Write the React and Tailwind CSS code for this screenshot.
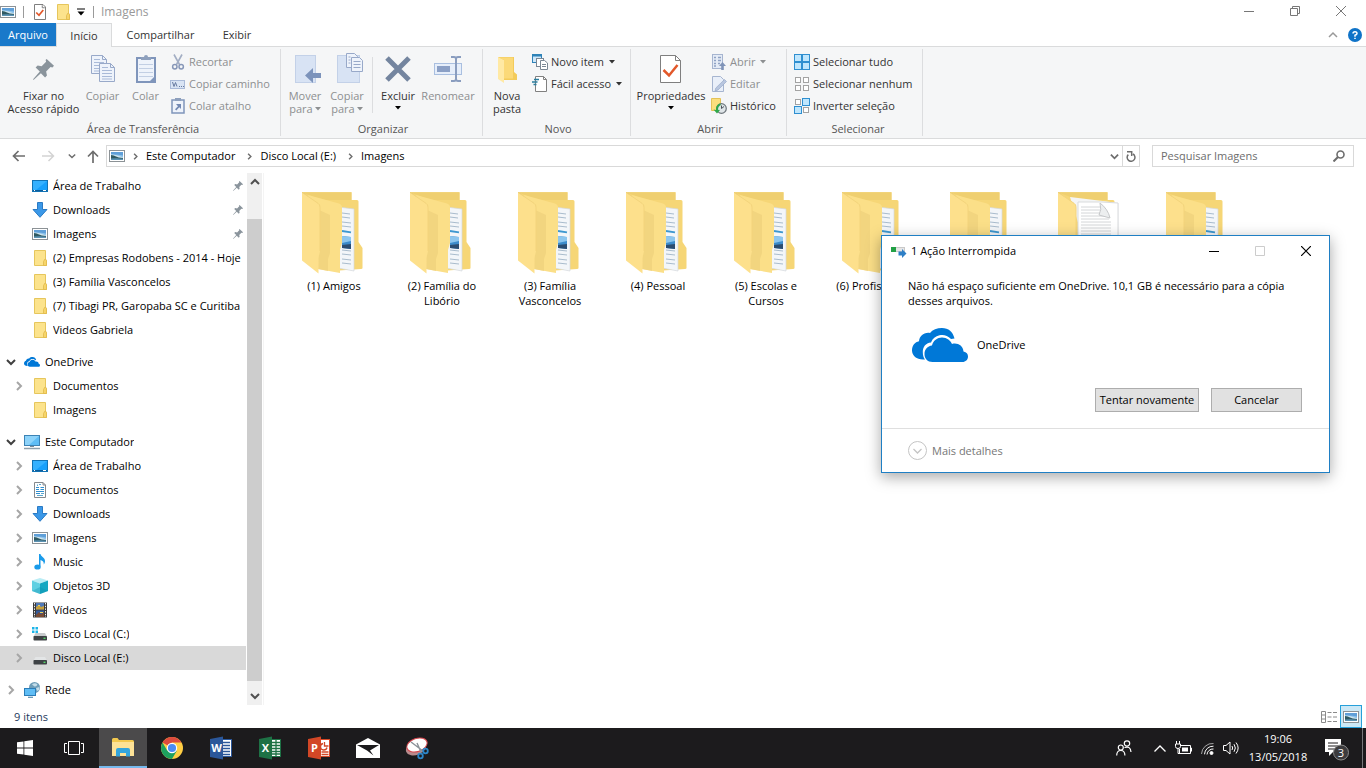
import React from 'react';
import clsx from 'clsx';

/* ---------- small icons (16px grid) ---------- */

const PictureIcon = () => (
  <svg width="16" height="16" viewBox="0 0 16 16" className="shrink-0">
    <rect x="0.5" y="2.5" width="15" height="11" fill="#fff" stroke="#8c9296" />
    <rect x="2" y="4" width="12" height="8" fill="#8fc4ec" />
    <path d="M2 4h12v3.500q-6 -1.500 -12 -1z" fill="#5f9fd8" />
    <path d="M2 6.500q5 0 12 3v2.500h-12z" fill="#cfe5ee" />
    <path d="M2 7q3 .2 5 1.600t7 1.400v2h-12z" fill="#2f5a63" />
    <path d="M2 10.500q6 -.8 12 .2v1.300h-12z" fill="#5c93b3" />
  </svg>
);

const FolderIcon = () => (
  <svg width="16" height="16" viewBox="0 0 16 16" className="shrink-0">
    <path d="M2.500 0.500h11v9l1 1v5h-12z" fill="#fce38c" stroke="#e6c65c" />
    <path d="M11.500 15.500v-4l1.500-2.500h.5l1 1.500v5z" fill="#f7d569" stroke="#e0b94c" strokeWidth="0.800" />
  </svg>
);

const DesktopIcon = () => (
  <svg width="16" height="16" viewBox="0 0 16 16" className="shrink-0">
    <rect x="0.500" y="2.500" width="15" height="11" fill="#18a0fb" stroke="#1273b5" />
    <path d="M1 3h14L4 12H1z" fill="#35b1ff" />
    <path d="M1 12.500h14" stroke="#0c5c99" />
    <path d="M2 12.500h1M11 12.500h3" stroke="#fff" />
  </svg>
);

const DownloadIcon = () => (
  <svg width="16" height="16" viewBox="0 0 16 16" className="shrink-0">
    <path d="M5.500 0.500h5v7h4.500L8 15.300 1 7.500h4.500z" fill="#3b98e8" stroke="#2a7ac4" strokeLinejoin="round" />
  </svg>
);

const DocumentIcon = () => (
  <svg width="16" height="16" viewBox="0 0 16 16" className="shrink-0">
    <path d="M2.500 0.500h8.500l2.500 2.500v12.500h-11z" fill="#fff" stroke="#85898d" />
    <path d="M11 0.500v2.500h2.500" fill="none" stroke="#85898d" />
    <path d="M4 5.500h3M4 7.500h3M8.500 5.500h3.500M8.500 7.500h3.500M4 9.500h8M4 11.500h4" stroke="#2f8fd0" />
    <path d="M5.500 2.500v1.500M7 2.500h2M9 11.500h3M5 13.500h6" stroke="#5aa7cf" />
  </svg>
);

const MusicIcon = () => (
  <svg width="16" height="16" viewBox="0 0 16 16" className="shrink-0">
    <path d="M7 0h1.500c.4 2.500 4.500 3.500 4.500 7 0 1.500-.5 2.600-1.200 3.500.2-2.600-1-3.800-3.300-4.500V12.500H7z" fill="#1a9bea" />
    <ellipse cx="5.500" cy="13" rx="3.200" ry="2.600" fill="#1a9bea" />
  </svg>
);

const CubeIcon = () => (
  <svg width="16" height="16" viewBox="0 0 16 16" className="shrink-0">
    <path d="M0 2.500L8 0l8 2.500L8 5.500z" fill="#b9edf5" />
    <path d="M0 2.500L8 5.500V16L0 13z" fill="#5fd0e2" />
    <path d="M16 2.500L8 5.500V16l8-3z" fill="#15a8c2" />
    <path d="M0 13l8-4 8 4-8 3z" fill="#0e8fae" opacity=".35" />
  </svg>
);

const VideoIcon = () => (
  <svg width="16" height="16" viewBox="0 0 16 16" className="shrink-0">
    <rect x="1" y="0.500" width="14" height="15" fill="#3a3a3a" />
    <path d="M2.500 1v14M13.500 1v14" stroke="#f2f2f2" strokeDasharray="1.500 1.200" />
    <rect x="4" y="1" width="8" height="6.500" fill="#4f79b8" />
    <rect x="4" y="8.500" width="8" height="6.500" fill="#335a9c" />
    <path d="M4 5l3-2 2 2 3-1v3.500H4z" fill="#c9a13a" />
    <path d="M4 13l3-3 2 2.500 3-2.500v5H4z" fill="#7a4b33" />
    <path d="M6 3.500h2M8 10.500h3" stroke="#e7d45b" />
  </svg>
);

const DriveIcon = ({ system }) => (
  <svg width="16" height="16" viewBox="0 0 16 16" className="shrink-0">
    {system && <path d="M0 1h2.500v2.500H0zM3.500 1H6v2.500H3.500zM0 4.500h2.500V7H0zM3.500 4.500H6V7H3.500z" fill="#1cb4e8" />}
    <path d="M3.500 7h9.500l2 3.500H1.500z" fill={system ? '#c8cbcd' : '#e3e5e6'} />
    <rect x="1.500" y="10" width="13.500" height="4.500" rx="0.800" fill="#3e4245" />
    <path d="M11.500 12.300h2" stroke="#57e06a" strokeWidth="1.300" />
  </svg>
);

const ComputerIcon = () => (
  <svg width="16" height="16" viewBox="0 0 16 16" className="shrink-0">
    <rect x="0.500" y="1.500" width="15" height="10" fill="#5fbdf5" stroke="#3c83b5" />
    <path d="M1 2h14L5 11H1z" fill="#8dd3fa" />
    <path d="M6 12.500h4" stroke="#7b8a94" />
    <path d="M0 14.500h16" stroke="#8ea0ac" strokeWidth="1.500" />
  </svg>
);

const NetworkIcon = () => (
  <svg width="16" height="16" viewBox="0 0 16 16" className="shrink-0">
    <circle cx="10.500" cy="5.500" r="5.500" fill="#6e9db8" />
    <path d="M8 2.500q3-2.500 5.500 0-1 2.500-3 2zM12 6l3.500-1-.5 3-2 1z" fill="#c4dde9" />
    <rect x="0.500" y="6.500" width="11" height="7" fill="#5fbdf5" stroke="#2b7db8" />
    <path d="M4 15.300h5" stroke="#5b8fb0" strokeWidth="1.200" />
  </svg>
);

const OneDriveIcon = ({ className }) => (
  <svg viewBox="0 0 56 34" className={clsx('shrink-0', className)}>
    <path d="M11 31.500C4.500 31.500 0 27.500 0 22.500c0-5 3-8.500 7-9.300C7.500 8 12 4 18 5 20.500 1.800 25 0 30 0c6.500 0 11 4 12.500 10.500L39 11C35.500 7 31 6.500 27.500 7.300 23.500 8.200 20.500 10.500 19 14.500 13.500 15 10.800 19 10.800 24c0 3 .7 5.500 2.200 7.500z" fill="#0078d7" />
    <path d="M20.500 34c-5 0-8-3.500-8-8s3-8 7.500-8.500C21 12.500 25.500 9.500 30 9.500c5 0 8.500 3 10 6.500 5.500-1.500 11 1.500 11.500 7.500 3 .5 4.500 2.500 4.500 5 0 3.200-2.500 5.500-5.500 5.500z" fill="#0078d7" />
  </svg>
);

const PinIcon = ({ size }) => (
  <svg width={size} height={size} viewBox="0 0 20 20" className="shrink-0">
    <path d="M13 0l7 6.500-1.500 1.500-1.800-.4-4.200 4.200.8 3.800-1.800 1.900-4-4L1 19.500 0 20l.3-1L6.500 12l-4-4 1.900-1.800 3.800.6 4.300-4.300L12 1z" fill="#8a949c" />
  </svg>
);

const PropertiesIcon = ({ big }) => (
  <svg width={big ? 32 : 16} height={big ? 32 : 16} viewBox="0 0 32 32" className="shrink-0">
    {big ? (
      <path d="M5.500 2.500h15l5 5v22h-20z" fill="#fff" stroke="#7f7f7f" />
    ) : (
      <path d="M5 1h17l5 5v25h-22z" fill="#fff" stroke="#7f7f7f" strokeWidth="2" />
    )}
    <path d="M20.500 2.500v5h5" fill="none" stroke="#7f7f7f" strokeWidth={big ? 1 : 2} />
    <path d="M8.500 17l5.500 5.500L22.500 12" fill="none" stroke="#e2582a" strokeWidth={big ? 2.5 : 3.5} />
  </svg>
);

/* ---------- ribbon icons ---------- */

const sheet = 'M0.500 0.500h11l4 4v14h-15z';

const CopyIcon = () => (
  <svg width="32" height="32" viewBox="0 0 32 32">
    {[[4, 2], [12, 10]].map(([x, y]) => (
      <g key={x} transform={`translate(${x} ${y})`}>
        <path d={sheet} fill="#eef3fb" stroke="#98a9c9" />
        <path d="M11.500 0.500v4h4" fill="none" stroke="#98a9c9" />
        <path d="M3 4.500h6M3 7.500h10M3 10.500h10M3 13.500h10M3 16h10" stroke="#a9bad8" />
      </g>
    ))}
  </svg>
);

const PasteIcon = () => (
  <svg width="32" height="32" viewBox="0 0 32 32">
    <rect x="7" y="5" width="18" height="24" fill="#eef3fb" stroke="#7f95bb" strokeWidth="2" />
    <path d="M11 7V4h3q0-2 2-2t2 2h3v3z" fill="#8ea0bd" />
    <path d="M9 11.500h14M9 15.500h14M9 19.500h14M9 23.500h14" stroke="#c2cfe4" />
    <path d="M20 28l4-4v4z" fill="#7f95bb" />
  </svg>
);

const CutIcon = () => (
  <svg width="16" height="16" viewBox="0 0 16 16" fill="none" className="shrink-0">
    <path d="M4 0.500l5.500 10M12 0.500l-5.500 10" stroke="#a3aec4" strokeWidth="1.600" />
    <circle cx="4.800" cy="12.800" r="2.200" stroke="#8797b8" strokeWidth="1.500" />
    <circle cx="11.200" cy="12.800" r="2.200" stroke="#8797b8" strokeWidth="1.500" />
  </svg>
);

const CopyPathIcon = () => (
  <svg width="16" height="16" viewBox="0 0 16 16" className="shrink-0">
    <rect x="0.500" y="4.500" width="14" height="8" fill="#d9e4f4" stroke="#a9bad8" />
    <path d="M2.500 6l1.500 4.500L5.500 6.500 7 10.500M9 10.500h1M11 10.500h1M13 10.500h1" stroke="#65799f" fill="none" />
  </svg>
);

const PasteShortcutIcon = () => (
  <svg width="16" height="16" viewBox="0 0 16 16" className="shrink-0">
    <rect x="2" y="2" width="12" height="13" fill="#eef3fb" stroke="#7f95bb" strokeWidth="1.500" />
    <rect x="5" y="0" width="6" height="3" fill="#8ea0bd" />
    <path d="M6 6h5v5l-1.700-1.700-3 3.200-1.300-1.300 3-3z" fill="#7389b3" />
  </svg>
);

const MoveToIcon = () => (
  <svg width="32" height="32" viewBox="0 0 32 32">
    <rect x="6.500" y="2.500" width="20" height="27" fill="#d8e3f4" stroke="#c3d1e8" />
    <path d="M16 22.500l8-7.500v5h8v5h-8v5z" fill="#7c93bb" />
  </svg>
);

const CopyToIcon = () => (
  <svg width="32" height="32" viewBox="0 0 32 32">
    <rect x="6.500" y="2.500" width="22" height="27" fill="#d8e3f4" stroke="#c3d1e8" />
    <path d="M15.500 0.500h8l3 3v11h-11z" fill="#eef3fb" stroke="#98a9c9" />
    <path d="M20.500 4.500h8l3 3v11h-11z" fill="#eef3fb" stroke="#98a9c9" />
    <path d="M17.500 4h2M17.500 7h2M17.500 10h2M22.500 8.500h7M22.500 11.500h7M22.500 14.500h7" stroke="#98a9c9" />
  </svg>
);

const DeleteIcon = () => (
  <svg width="32" height="32" viewBox="0 0 32 32">
    <path d="M5 5l22 22M27 5L5 27" stroke="#74859f" strokeWidth="5" />
  </svg>
);

const RenameIcon = () => (
  <svg width="32" height="32" viewBox="0 0 32 32">
    <rect x="2.500" y="10.500" width="27" height="11" fill="#e6eefa" stroke="#a9bfe0" />
    <rect x="5" y="13" width="13" height="6" fill="#8ba0c6" />
    <path d="M19 4h3q2 0 2 2v20q0 2-2 2h-3M29 4h-3q-2 0-2 2M29 28h-3q-2 0-2-2" fill="none" stroke="#8a9dbf" strokeWidth="2" />
  </svg>
);

const NewFolderIcon = () => (
  <svg width="32" height="32" viewBox="0 0 32 32">
    <path d="M7 4h16v15l3 2.500V27H9z" fill="#f3cb5b" />
    <path d="M7 4l6 3v23l-6-4z" fill="#ffe9a4" />
    <path d="M8 4.500h14v21H13V7z" fill="#fbd978" />
  </svg>
);

const NewItemIcon = () => (
  <svg width="16" height="16" viewBox="0 0 16 16" className="shrink-0">
    <rect x="0.500" y="0.500" width="9" height="8" fill="#cfe8fa" stroke="#2f83b8" />
    <path d="M0.500 1.500h9" stroke="#2f83b8" strokeWidth="2" />
    <rect x="4.500" y="4.500" width="7" height="8" fill="#fff" stroke="#7b8794" />
    <path d="M8.500 6.500h4l3 2.500v6.500h-7z" fill="#fff" stroke="#7b8794" />
    <path d="M10 10.500h4M10 12.500h4" stroke="#7b8794" />
  </svg>
);

const EasyAccessIcon = () => (
  <svg width="16" height="16" viewBox="0 0 16 16" className="shrink-0">
    <path d="M3.500 0.500h8l3 3v12h-11z" fill="#fff" stroke="#808080" />
    <path d="M11.500 0.500v3h3" fill="none" stroke="#808080" />
    <path d="M2 3.500h5M0 6h5.500M1.500 8.500h3" stroke="#2a7e9e" strokeWidth="1.400" />
  </svg>
);

const OpenIcon = () => (
  <svg width="16" height="16" viewBox="0 0 16 16" className="shrink-0">
    <rect x="1.500" y="0.500" width="10" height="14" fill="#e4ebf6" stroke="#a6b5d0" />
    <path d="M3 3.500h2M3 6.500h2M3 9.500h2M7 3.500h3M7 6.500h3M7 9.500h2M3 12h2" stroke="#8fa2c4" strokeWidth="1.500" />
    <path d="M11.500 8l3.500 4h-2.200v4h-2.600v-4H8z" fill="#8094b8" />
  </svg>
);

const EditIcon = () => (
  <svg width="16" height="16" viewBox="0 0 16 16" className="shrink-0">
    <path d="M1.500 0.500h8l3 3v12h-11z" fill="#e9eff9" stroke="#a6b5d0" />
    <path d="M13.500 3.500l2 2-8.500 8.500-3 1 .8-3z" fill="#b8c6df" stroke="#9aabca" strokeWidth="0.700" />
  </svg>
);

const HistoryIcon = () => (
  <svg width="16" height="16" viewBox="0 0 16 16" className="shrink-0">
    <path d="M0.500 0.500h9v12h-9z" fill="#fbdf7d" stroke="#e4c258" />
    <circle cx="10.500" cy="10.500" r="4.800" fill="#dfe5e8" stroke="#6d757b" strokeWidth="1.200" />
    <path d="M10.500 7.500v3l2.500-2" fill="none" stroke="#4d545a" />
    <path d="M9 5.500Q4.500 7 5 12l-2.500-.5 3.500 4 3-3.500-2-.2Q7 8 10 7z" fill="#2fa84a" />
  </svg>
);

const cell = (x, y, on) => (
  <rect key={`${x}-${y}`} x={x} y={y} width={on ? 7 : 5} height={on ? 7 : 5} fill={on ? '#bfe6fd' : '#fff'} stroke={on ? '#2f8fd0' : '#a3a3a3'} />
);

const SelectAllIcon = () => (
  <svg width="16" height="16" viewBox="0 0 16 16" className="shrink-0">
    {cell(0.5, 0.5, true)}{cell(8.5, 0.5, true)}{cell(0.5, 8.5, true)}{cell(8.5, 8.5, true)}
  </svg>
);

const SelectNoneIcon = () => (
  <svg width="16" height="16" viewBox="0 0 16 16" className="shrink-0">
    {cell(1.5, 1.5, false)}{cell(9.5, 1.5, false)}{cell(1.5, 9.5, false)}{cell(9.5, 9.5, false)}
  </svg>
);

const InvertIcon = () => (
  <svg width="16" height="16" viewBox="0 0 16 16" className="shrink-0">
    {cell(1.5, 1.5, false)}{cell(8.5, 0.5, true)}{cell(0.5, 8.5, true)}{cell(9.5, 9.5, false)}
  </svg>
);

const Caret = () => (
  <svg width="6" height="4" viewBox="0 0 6 4" className="shrink-0">
    <path d="M0 0h6L3 3.500z" fill="currentColor" />
  </svg>
);

const Chevron = ({ dir, size = 10, width = 2 }) => {
  const paths = {
    right: 'M3 1l4 4-4 4',
    down: 'M1 3l4 4 4-4',
    up: 'M1 7l4-4 4 4',
  };
  return (
    <svg width={size} height={size} viewBox="0 0 10 10" className="shrink-0">
      <path d={paths[dir]} fill="none" stroke="currentColor" strokeWidth={width} />
    </svg>
  );
};

/* ---------- ribbon parts ---------- */

const BigButton = ({ icon, lines, caret, disabled, className }) => (
  <button disabled={disabled} className={clsx('flex flex-col items-center shrink-0', disabled ? 'text-[#8d8f91]' : 'text-[#333]', className)}>
    <span className="flex h-8 items-center mt-1 mb-1">{icon}</span>
    {lines.map((line, i) => (
      <span key={line} className="flex items-center gap-0.5 leading-[13px] whitespace-nowrap">
        {line}
        {caret && i > 0 && <Caret />}
      </span>
    ))}
    {caret && lines.length === 1 && <span className="flex h-3 items-center text-black"><Caret /></span>}
  </button>
);

const SmallButton = ({ icon, label, caret, disabled }) => (
  <button disabled={disabled} className={clsx('flex h-[22px] items-center gap-[3px] whitespace-nowrap', disabled ? 'text-[#8d8f91]' : 'text-[#333]')}>
    {icon}
    <span>{label}</span>
    {caret && <span className="ml-0.5"><Caret /></span>}
  </button>
);

const RibbonGroup = ({ title, className, children }) => (
  <section className={clsx('flex shrink-0 flex-col justify-between border-r border-[#dcdddf]', className)}>
    <div className="flex">{children}</div>
    <h2 className="text-center leading-[14px] text-[#555]">{title}</h2>
  </section>
);

const Ribbon = () => (
  <div className="flex h-[92px] shrink-0 border-b border-[#dadbdc] bg-[#f5f6f7] py-0.5">
    <RibbonGroup title="Área de Transferência" className="w-[281px] pl-1.5">
      <BigButton className="w-[75px]" icon={<PinIcon size={21} />} lines={['Fixar no', 'Acesso rápido']} />
      <BigButton className="w-[43px]" icon={<CopyIcon />} lines={['Copiar']} disabled />
      <BigButton className="w-[43px]" icon={<PasteIcon />} lines={['Colar']} disabled />
      <div className="ml-[3px] mt-0.5">
        <SmallButton icon={<CutIcon />} label="Recortar" disabled />
        <SmallButton icon={<CopyPathIcon />} label="Copiar caminho" disabled />
        <SmallButton icon={<PasteShortcutIcon />} label="Colar atalho" disabled />
      </div>
    </RibbonGroup>
    <RibbonGroup title="Organizar" className="w-[202px] pl-[3px]">
      <BigButton className="w-[42px]" icon={<MoveToIcon />} lines={['Mover', 'para']} caret disabled />
      <BigButton className="w-[42px]" icon={<CopyToIcon />} lines={['Copiar', 'para']} caret disabled />
      <div className="mx-1 mt-2 h-14 w-px bg-[#dcdddf]" />
      <BigButton className="w-[42px]" icon={<DeleteIcon />} lines={['Excluir']} caret />
      <BigButton className="w-[58px]" icon={<RenameIcon />} lines={['Renomear']} disabled />
    </RibbonGroup>
    <RibbonGroup title="Novo" className="w-[148px] pl-[3px]">
      <BigButton className="w-[42px]" icon={<NewFolderIcon />} lines={['Nova', 'pasta']} />
      <div className="ml-1 mt-0.5">
        <SmallButton icon={<NewItemIcon />} label="Novo item" caret />
        <SmallButton icon={<EasyAccessIcon />} label="Fácil acesso" caret />
      </div>
    </RibbonGroup>
    <RibbonGroup title="Abrir" className="w-[156px] pl-[3px]">
      <BigButton className="w-[74px]" icon={<PropertiesIcon big />} lines={['Propriedades']} caret />
      <div className="ml-[3px] mt-0.5">
        <SmallButton icon={<OpenIcon />} label="Abrir" caret disabled />
        <SmallButton icon={<EditIcon />} label="Editar" disabled />
        <SmallButton icon={<HistoryIcon />} label="Histórico" />
      </div>
    </RibbonGroup>
    <RibbonGroup title="Selecionar" className="w-[136px] pl-[7px]">
      <div className="mt-0.5">
        <SmallButton icon={<SelectAllIcon />} label="Selecionar tudo" />
        <SmallButton icon={<SelectNoneIcon />} label="Selecionar nenhum" />
        <SmallButton icon={<InvertIcon />} label="Inverter seleção" />
      </div>
    </RibbonGroup>
  </div>
);

/* ---------- window chrome ---------- */

const TitleBar = () => (
  <header className="flex h-[23px] shrink-0 items-center">
    <PictureIcon />
    <span className="ml-[7px] h-3 w-px bg-[#9a9a9a]" />
    <button aria-label="Propriedades" className="ml-2"><PropertiesIcon /></button>
    <button aria-label="Nova pasta" className="ml-[7px]"><FolderIcon /></button>
    <button aria-label="Personalizar" className="ml-1.5">
      <svg width="8" height="8" viewBox="0 0 8 8"><path d="M0 1h8" stroke="#000" /><path d="M0.500 3.500h7L4 7.500z" fill="#000" /></svg>
    </button>
    <span className="ml-2 h-3 w-px bg-[#9a9a9a]" />
    <h1 className="ml-[7px] text-[12px] text-[#999]">Imagens</h1>
    <div className="mr-0.5 mb-0.5 ml-auto flex text-[#777]">
      <button aria-label="Minimizar" className="flex w-[46px] justify-center">
        <svg width="10" height="10" viewBox="0 0 10 10"><path d="M0 5.500h10" stroke="currentColor" /></svg>
      </button>
      <button aria-label="Restaurar" className="flex w-[46px] justify-center">
        <svg width="10" height="10" viewBox="0 0 10 10"><path d="M0.500 2.500h7v7h-7zM2.500 2.500v-2h7v7h-2" fill="none" stroke="currentColor" /></svg>
      </button>
      <button aria-label="Fechar" className="flex w-[46px] justify-center">
        <svg width="10" height="10" viewBox="0 0 10 10"><path d="M0 0l10 10M10 0L0 10" stroke="currentColor" /></svg>
      </button>
    </div>
  </header>
);

const RibbonTabs = () => (
  <div className="flex h-6 shrink-0 border-b border-[#dadbdc] text-[#333]">
    <button className="w-14 bg-[#1979ca] text-white">Arquivo</button>
    <button className="-mb-px w-14 border border-b-0 border-[#dadbdc] bg-[#f5f6f7]">Início</button>
    <button className="w-[97px]">Compartilhar</button>
    <button className="w-14">Exibir</button>
    <div className="mr-1 ml-auto flex items-center gap-2.5 text-[#999]">
      <button aria-label="Minimizar faixa"><Chevron dir="up" width={1.5} /></button>
      <button aria-label="Ajuda">
        <svg width="14" height="14" viewBox="0 0 14 14" fill="none">
          <circle cx="7" cy="7" r="7" fill="#0f73c8" />
          <path d="M5 5.500Q5 3.700 7 3.700T9 5.500Q9 6.500 7 7.300V8.800M7 9.800v1.300" stroke="#fff" strokeWidth="1.500" />
        </svg>
      </button>
    </div>
  </div>
);

const AddressBar = () => (
  <div className="flex h-[34px] shrink-0 items-center px-3 text-[#6d6d6d]">
    <button aria-label="Voltar" className="w-[14px]">
      <svg width="13" height="12" viewBox="0 0 13 12" fill="none"><path d="M13 6H1.500M6.500 1l-5 5 5 5" stroke="currentColor" strokeWidth="1.700" /></svg>
    </button>
    <button aria-label="Avançar" className="ml-4 w-[14px] text-[#d3d3d3]">
      <svg width="13" height="12" viewBox="0 0 13 12" fill="none"><path d="M0 6h11.500M6.500 1l5 5-5 5" stroke="currentColor" strokeWidth="1.500" /></svg>
    </button>
    <button aria-label="Locais recentes" className="ml-3"><Chevron dir="down" size={8} width={1.8} /></button>
    <button aria-label="Acima" className="ml-[11px] w-3">
      <svg width="12" height="13" viewBox="0 0 12 13" fill="none"><path d="M6 13V1.500M1 6.500l5-5 5 5" stroke="currentColor" strokeWidth="1.700" /></svg>
    </button>
    <div className="ml-[7px] flex h-[22px] flex-1 items-center border border-[#d9d9d9] pl-0.5">
      <PictureIcon />
      {['Este Computador', 'Disco Local (E:)', 'Imagens'].map((crumb) => (
        <React.Fragment key={crumb}>
          <span className="mx-[7px] flex"><Chevron dir="right" size={7} /></span>
          <button className="pr-1 text-black">{crumb}</button>
        </React.Fragment>
      ))}
      <button aria-label="Histórico de locais" className="mr-[3px] ml-auto"><Chevron dir="down" size={9} /></button>
      <button aria-label="Atualizar" className="flex h-full w-[17px] items-center justify-center border-l border-[#d9d9d9]">
        <svg width="10" height="11" viewBox="0 0 10 11" fill="none">
          <path d="M2.300 3.600A3.900 3.900 0 1 0 7 3M1 0.800h4.700v4.200" stroke="currentColor" strokeWidth="1.500" />
        </svg>
      </button>
    </div>
    <label className="ml-3 flex h-[22px] w-[202px] items-center border border-[#d9d9d9] px-2">
      <input type="search" placeholder="Pesquisar Imagens" aria-label="Pesquisar Imagens" className="w-full min-w-0 flex-1 outline-none placeholder:text-[#6d6d6d]" />
      <svg width="12" height="12" viewBox="0 0 12 12" fill="none"><circle cx="7.500" cy="4.500" r="3.500" stroke="currentColor" strokeWidth="1.600" /><path d="M5 7l-4.500 4.500" stroke="currentColor" strokeWidth="2" /></svg>
    </label>
  </div>
);

/* ---------- navigation pane ---------- */

const tree = [
  [
    { label: 'Área de Trabalho', icon: <DesktopIcon />, pinned: true },
    { label: 'Downloads', icon: <DownloadIcon />, pinned: true },
    { label: 'Imagens', icon: <PictureIcon />, pinned: true },
    { label: '(2) Empresas Rodobens - 2014 - Hoje', icon: <FolderIcon /> },
    { label: '(3) Família Vasconcelos', icon: <FolderIcon /> },
    { label: '(7) Tibagi PR, Garopaba SC e Curitiba', icon: <FolderIcon /> },
    { label: 'Videos Gabriela', icon: <FolderIcon /> },
  ],
  [
    { label: 'OneDrive', icon: <OneDriveIcon className="w-4" />, root: true, open: true },
    { label: 'Documentos', icon: <FolderIcon />, expand: true },
    { label: 'Imagens', icon: <FolderIcon /> },
  ],
  [
    { label: 'Este Computador', icon: <ComputerIcon />, root: true, open: true },
    { label: 'Área de Trabalho', icon: <DesktopIcon />, expand: true },
    { label: 'Documentos', icon: <DocumentIcon />, expand: true },
    { label: 'Downloads', icon: <DownloadIcon />, expand: true },
    { label: 'Imagens', icon: <PictureIcon />, expand: true },
    { label: 'Music', icon: <MusicIcon />, expand: true },
    { label: 'Objetos 3D', icon: <CubeIcon />, expand: true },
    { label: 'Vídeos', icon: <VideoIcon />, expand: true },
    { label: 'Disco Local (C:)', icon: <DriveIcon system />, expand: true },
    { label: 'Disco Local (E:)', icon: <DriveIcon />, expand: true, selected: true },
  ],
  [{ label: 'Rede', icon: <NetworkIcon />, root: true, expand: true }],
];

const TreeRow = ({ item }) => (
  <li className={clsx('flex h-6 items-center', item.root ? 'pl-1.5' : 'pl-[14px]', item.selected && 'bg-[#d9d9d9]')}>
    <span className={clsx('flex w-[18px] shrink-0', item.open ? 'text-[#404040]' : 'text-[#a6a6a6]')}>
      {item.open && <Chevron dir="down" />}
      {item.expand && <Chevron dir="right" />}
    </span>
    <a href="#" className="flex min-w-0 flex-1 items-center gap-[5px]">
      {item.icon}
      <span className="overflow-hidden whitespace-nowrap">{item.label}</span>
    </a>
    {item.pinned && <span className="mr-[3px]"><PinIcon size={10} /></span>}
  </li>
);

const NavPane = () => (
  <div className="flex w-[264px] shrink-0 border-r border-[#f4f4f4]">
    <nav className="flex w-[246px] flex-col gap-2 overflow-hidden pt-px">
      {tree.map((group, i) => (
        <ul key={i}>
          {group.map((item) => <TreeRow key={item.label} item={item} />)}
        </ul>
      ))}
    </nav>
    <div className="ml-px flex w-[15px] flex-col bg-[#f0f0f0] text-[#505050]">
      <button aria-label="Rolar para cima" className="flex h-[18px] items-center justify-center"><Chevron dir="up" /></button>
      <div className="mt-7 flex-1 bg-[#cdcdcd]" />
      <button aria-label="Rolar para baixo" className="mt-1.5 flex h-[18px] items-center justify-center"><Chevron dir="down" /></button>
    </div>
  </div>
);

/* ---------- folder view ---------- */

const BigFolder = ({ doc }) => (
  <svg width="64" height="84" viewBox="0 0 64 84">
    <path d="M0 1.300h49.500V9h5.500q1.500 0 1.500 1.500V51l4 6v20q0 1-1.500 1L30 80 0 66z" fill="#f6d676" />
    <path d="M0 1.300h49.500V9L20 9z" fill="#efcf70" />
    <path d="M0 1.300l7 5.500" stroke="#b79a4c" />
    {doc ? (
      <g>
        <path d="M12 6l49 6v68l-25 2z" fill="#f4f5f6" />
        <path d="M20 11h24l16 1v68H20z" fill="#fff" stroke="#d9dbdd" />
        <path d="M23 16h20M23 19h22M23 22h24M23 25h25M23 28h28M23 31h30M23 34h30M23 37h30M23 40h30M23 43h30" stroke="#d4d6d8" />
        <path d="M42 12q2 7-1 12l11 3q-2-9-10-15z" fill="#eceeef" stroke="#c6c8ca" />
      </g>
    ) : (
      <g>
        <path d="M36 16l16 2v62l-16-3z" fill="#f3f6f9" stroke="#d4d8dc" strokeWidth="0.700" />
        <path d="M40 22l8 1M40 26l8 1M40 31l9 1M40 35l9 1M40 59l9 1M40 63l9 1M40 68l9 1M40 72l9 1" stroke="#a9bccd" />
        <path d="M40 40l9 1.300" stroke="#3d97cf" strokeWidth="1.800" />
        <path d="M40 45l9 1v12l-9-1z" fill="#3c8ccb" />
        <path d="M40 45l9 1v4l-9 2z" fill="#8cc6ee" />
        <path d="M40 54l9-1v5l-9-1z" fill="#2b4d70" />
        <path d="M6 4l31 8.500q3 1 3 4V52l-2 7v23L16 78z" fill="#fbdf88" />
        <path d="M17 19l11 5v38l-2 6v12l-10-2z" fill="#eed07c" opacity=".7" />
      </g>
    )}
    <path d="M0 1.300l16 11q2 1 2 4V60l-1.500 7v15.500L0 69.500z" fill="#fde08c" />
    <path d="M0 1.300l16 11q2 1 2 4V60" fill="none" stroke="#f3d47c" />
  </svg>
);

const folders = [
  { label: '(1) Amigos' },
  { label: '(2) Família do Libório' },
  { label: '(3) Família Vasconcelos' },
  { label: '(4) Pessoal' },
  { label: '(5) Escolas e Cursos' },
  { label: '(6) Profissional' },
  { label: '' },
  { label: '', doc: true },
  { label: '' },
];

const FolderView = () => (
  <main className="flex min-w-0 flex-1 flex-wrap content-start pt-[18px] pl-4">
    {folders.map((folder, i) => (
      <button key={i} className="flex w-[108px] flex-col items-center px-3 pb-4">
        <BigFolder doc={folder.doc} />
        <span className="mt-[3px] leading-[15px]">{folder.label}</span>
      </button>
    ))}
  </main>
);

const StatusBar = () => (
  <footer className="flex h-[23px] shrink-0 items-stretch pr-1 pl-3.5 text-[#1e395b]">
    <span className="self-center">9 itens</span>
    <div className="ml-auto flex items-center gap-[3px]">
      <button aria-label="Detalhes">
        <svg width="16" height="12" viewBox="0 0 16 12" fill="none">
          <path d="M0.500 0.500h4v11h-4zM0.500 4h4M0.500 8h4" stroke="#8a8a8a" />
          <path d="M6.500 1.500h4M12 1.500h4M6.500 6h4M12 6h4M6.500 10.500h4M12 10.500h4" stroke="#8a8a8a" />
        </svg>
      </button>
      <button aria-label="Ícones grandes" className="flex h-full w-[22px] items-center justify-center border border-[#26a0da] bg-[#cbe8f6]">
        <PictureIcon />
      </button>
    </div>
  </footer>
);

/* ---------- error dialog ---------- */

const ErrorDialog = () => (
  <div role="dialog" aria-labelledby="dialog-title" className="absolute top-[235px] right-9 w-[449px] border border-[#1f7fc4] bg-white text-black shadow-[0_4px_14px_rgba(0,0,0,0.35)]">
    <div className="flex h-[30px] items-center pl-[9px]">
      <svg width="16" height="16" viewBox="0 0 16 16" className="shrink-0">
        <rect x="0.500" y="4.500" width="13" height="4" fill="#e6e6e6" stroke="#c9c9c9" />
        <rect x="0" y="4" width="5" height="5" fill="#22a045" />
        <path d="M7.500 8.500H11V6l4.500 4.500L11 15v-2.500H7.500z" fill="#2e7fc6" />
      </svg>
      <h2 id="dialog-title" className="ml-1">1 Ação Interrompida</h2>
      <div className="ml-auto flex">
        <button aria-label="Minimizar" className="flex w-[46px] justify-center">
          <svg width="10" height="10" viewBox="0 0 10 10"><path d="M0 5.500h10" stroke="#000" /></svg>
        </button>
        <button aria-label="Maximizar" disabled className="flex w-[46px] justify-center">
          <svg width="10" height="10" viewBox="0 0 10 10"><path d="M0.500 0.500h9v9h-9z" fill="none" stroke="#ccc" /></svg>
        </button>
        <button aria-label="Fechar" className="flex w-[46px] justify-center">
          <svg width="10" height="10" viewBox="0 0 10 10"><path d="M0 0l10 10M10 0L0 10" stroke="#000" strokeWidth="1.200" /></svg>
        </button>
      </div>
    </div>
    <div className="px-[26px] pt-3 pb-4">
      <p className="leading-[15px]">Não há espaço suficiente em OneDrive. 10,1 GB é necessário para a cópia desses arquivos.</p>
      <div className="mt-5 ml-1 flex items-center gap-[9px]">
        <OneDriveIcon className="w-14" />
        <span>OneDrive</span>
      </div>
      <div className="mt-[26px] mr-px flex justify-end gap-3">
        <button className="h-6 w-[104px] border border-[#adadad] bg-[#e1e1e1] whitespace-nowrap">Tentar novamente</button>
        <button className="h-6 w-[91px] border border-[#adadad] bg-[#e1e1e1]">Cancelar</button>
      </div>
    </div>
    <div className="flex h-11 items-center border-t border-[#dfdfdf] pl-[26px]">
      <button className="flex items-center gap-[5px] text-[#767676]">
        <svg width="19" height="19" viewBox="0 0 19 19" fill="none"><circle cx="9.500" cy="9.500" r="9" stroke="#c4c4c4" /><path d="M5.500 8l4 4 4-4" stroke="#c4c4c4" strokeWidth="1.300" /></svg>
        Mais detalhes
      </button>
    </div>
  </div>
);

/* ---------- taskbar ---------- */

const OfficeIcon = ({ letter, color, children }) => (
  <svg width="24" height="24" viewBox="0 0 24 24">
    <rect x="11" y="3.500" width="11.500" height="17" fill="#fff" stroke={color} />
    <g stroke={color} fill="none">{children}</g>
    <path d="M1 3l13-2.500v23L1 21z" fill={color} />
    <text x="7.500" y="16" textAnchor="middle" fontSize="11" fontWeight="700" fill="#fff">{letter}</text>
  </svg>
);

const apps = [
  {
    name: 'Iniciar',
    icon: <svg width="16" height="16" viewBox="0 0 16 16"><path d="M0 2.300l6.500-.9v6.200H0zM7.300 1.300L16 0v7.600H7.300zM0 8.400h6.500v6.200L0 13.700zM7.300 8.400H16V16l-8.700-1.300z" fill="#fff" /></svg>,
  },
  {
    name: 'Visão de tarefas',
    icon: <svg width="20" height="14" viewBox="0 0 20 14"><path d="M4.500 0.500h11v13h-11zM3 2.500H0.500v9H3M17 2.500h2.500v9H17" fill="none" stroke="#fff" /></svg>,
  },
  {
    name: 'Explorador de Arquivos',
    active: true,
    icon: (
      <svg width="24" height="24" viewBox="0 0 24 24">
        <path d="M1 4.500q0-1.500 1.500-1.500h4l1.500 2h13.500q1.500 0 1.500 1.500V21H1z" fill="#f3c94f" />
        <path d="M1 7h22v14H1z" fill="#fde296" />
        <path d="M5 21.500V15q0-2 2-2h10q2 0 2 2v6.500h-4V18H9v3.500z" fill="#34a5dc" />
      </svg>
    ),
  },
  {
    name: 'Google Chrome',
    icon: (
      <svg width="24" height="24" viewBox="0 0 24 24">
        <circle cx="12" cy="12" r="11" fill="#ffce44" />
        <path d="M12 12L2.500 6.500A11 11 0 0 1 21.500 6.500H12z" fill="#dd4b3e" />
        <path d="M12 12l4.700 2.900L12 23A11 11 0 0 1 2.500 6.500L7.300 14.700z" fill="#1da15f" />
        <circle cx="12" cy="12" r="5.200" fill="#fff" />
        <circle cx="12" cy="12" r="4.100" fill="#4b8bf4" />
      </svg>
    ),
  },
  { name: 'Word', icon: <OfficeIcon letter="W" color="#2b579a"><path d="M14 6.500h7M14 9.500h7M14 12.500h7M14 15.500h7M14 18.500h7" strokeWidth="1.300" /></OfficeIcon> },
  { name: 'Excel', icon: <OfficeIcon letter="X" color="#1e7145"><path d="M14 6.500h8M14 9.500h8M14 12.500h8M14 15.500h8M14 18h8M18 4v16" strokeWidth="1.300" /></OfficeIcon> },
  { name: 'PowerPoint', icon: <OfficeIcon letter="P" color="#d24726"><path d="M17.500 6v4h4M16 7.500a3.300 3.300 0 1 0 4 4M14.500 16h7M14.500 18.500h7" strokeWidth="1.300" /></OfficeIcon> },
  {
    name: 'Email',
    icon: (
      <svg width="24" height="20" viewBox="0 0 24 20">
        <path d="M0 6.500L12 0l12 6.500V20H0z" fill="#fff" />
        <path d="M1 7h22l-9 5.500 3.500 5-6.500-5z" fill="#1c1b1d" />
      </svg>
    ),
  },
  {
    name: 'Ferramenta de Captura',
    icon: (
      <svg width="24" height="24" viewBox="0 0 24 24">
        <ellipse cx="11" cy="12" rx="10.500" ry="7" fill="#b98b8d" transform="rotate(-22 11 12)" />
        <ellipse cx="12" cy="9" rx="10.500" ry="6.500" fill="#fff" stroke="#d8484f" transform="rotate(-18 12 9)" />
        <path d="M6 6l12 9M12 7l4 9" stroke="#8b9298" strokeWidth="1.400" />
        <circle cx="20.500" cy="15" r="2.300" fill="none" stroke="#2c86c9" strokeWidth="1.800" />
        <circle cx="15.500" cy="20" r="2.300" fill="none" stroke="#2c86c9" strokeWidth="1.800" />
      </svg>
    ),
  },
];

const Taskbar = () => (
  <div className="flex h-10 shrink-0 justify-between bg-[#1c1b1d] text-white">
    <div className="flex gap-px pl-px">
      {apps.map((app) => (
        <button
          key={app.name}
          aria-label={app.name}
          className={clsx('flex w-12 items-center justify-center', app.active && 'border-b-2 border-[#76b9ed] bg-[#4b4a4b]')}
        >
          {app.icon}
        </button>
      ))}
    </div>
    <div className="flex items-center">
      <button aria-label="Pessoas" className="mr-[22px]">
        <svg width="16" height="16" viewBox="0 0 16 16" fill="none" stroke="#fff" strokeWidth="1.200">
          <circle cx="4.800" cy="7.500" r="2.500" /><path d="M0.700 15.500q0-5 4.100-5t4.100 5" />
          <circle cx="11" cy="3.500" r="2.700" /><path d="M8.500 7.500q6-2 6.500 4.500" />
        </svg>
      </button>
      <div className="flex items-center gap-2">
        <button aria-label="Ícones ocultos" className="mr-px">
          <svg width="12" height="7" viewBox="0 0 12 7" fill="none"><path d="M0.500 6.500l5.500-5.500 5.500 5.500" stroke="#fff" strokeWidth="1.300" /></svg>
        </button>
        <button aria-label="Bateria">
          <svg width="17" height="14" viewBox="0 0 17 14" fill="none">
            <path d="M6 4.500h9.500v8h-11V8M15.500 7h1v3.500" stroke="#fff" />
            <rect x="7" y="6.500" width="6" height="4" fill="#fff" />
            <path d="M0.500 3h5v2.500q0 2-2.500 2t-2.500-2zM1.500 0v3M4.500 0v3M3 7.500v5h2" stroke="#fff" />
          </svg>
        </button>
        <button aria-label="Rede sem fio">
          <svg width="15" height="14" viewBox="0 0 15 14" fill="none" stroke="#fff">
            <path d="M1.500 13A11 11 0 0 1 13.500 2.500" opacity=".6" /><path d="M4.500 13.300A8.500 8.500 0 0 1 13.500 5.200" /><path d="M7 13.500A6 6 0 0 1 13.500 8" />
            <circle cx="11.500" cy="12" r="1.500" fill="#fff" />
          </svg>
        </button>
        <button aria-label="Volume">
          <svg width="16" height="14" viewBox="0 0 16 14" fill="none" stroke="#fff">
            <path d="M0.500 4.500h2.500l4-3.500v12l-4-3.500H0.500z" /><path d="M9 5q1.300 2 0 4M11 3.200q2.700 3.800 0 7.600M13 1.500q4.300 5.500 0 11" />
          </svg>
        </button>
      </div>
      <button className="flex w-[78px] flex-col items-center leading-[18px]">
        <span>19:06</span>
        <span>13/05/2018</span>
      </button>
      <button aria-label="Central de ações" className="mr-3 ml-[7px]">
        <svg width="26" height="26" viewBox="0 0 26 26">
          <path d="M1 4h16v13H9l-4 4v-4H1z" fill="#fff" />
          <path d="M4 8h10M4 11h10M4 14h7" stroke="#1c1b1d" />
          <circle cx="17" cy="17.500" r="7.500" fill="#3c3b3d" stroke="#8c8c8c" />
          <text x="17" y="21.500" textAnchor="middle" fontSize="11" fill="#fff">3</text>
        </svg>
      </button>
      <div className="h-full w-1 border-l border-[#77777a]" />
    </div>
  </div>
);

const App = () => (
  <div className="relative flex h-screen flex-col overflow-hidden bg-white font-['Open_Sans','Noto_Sans',sans-serif] text-[11px] leading-4 text-black">
    <TitleBar />
    <RibbonTabs />
    <Ribbon />
    <AddressBar />
    <div className="flex min-h-0 flex-1">
      <NavPane />
      <FolderView />
    </div>
    <StatusBar />
    <Taskbar />
    <ErrorDialog />
  </div>
);

export default App;
